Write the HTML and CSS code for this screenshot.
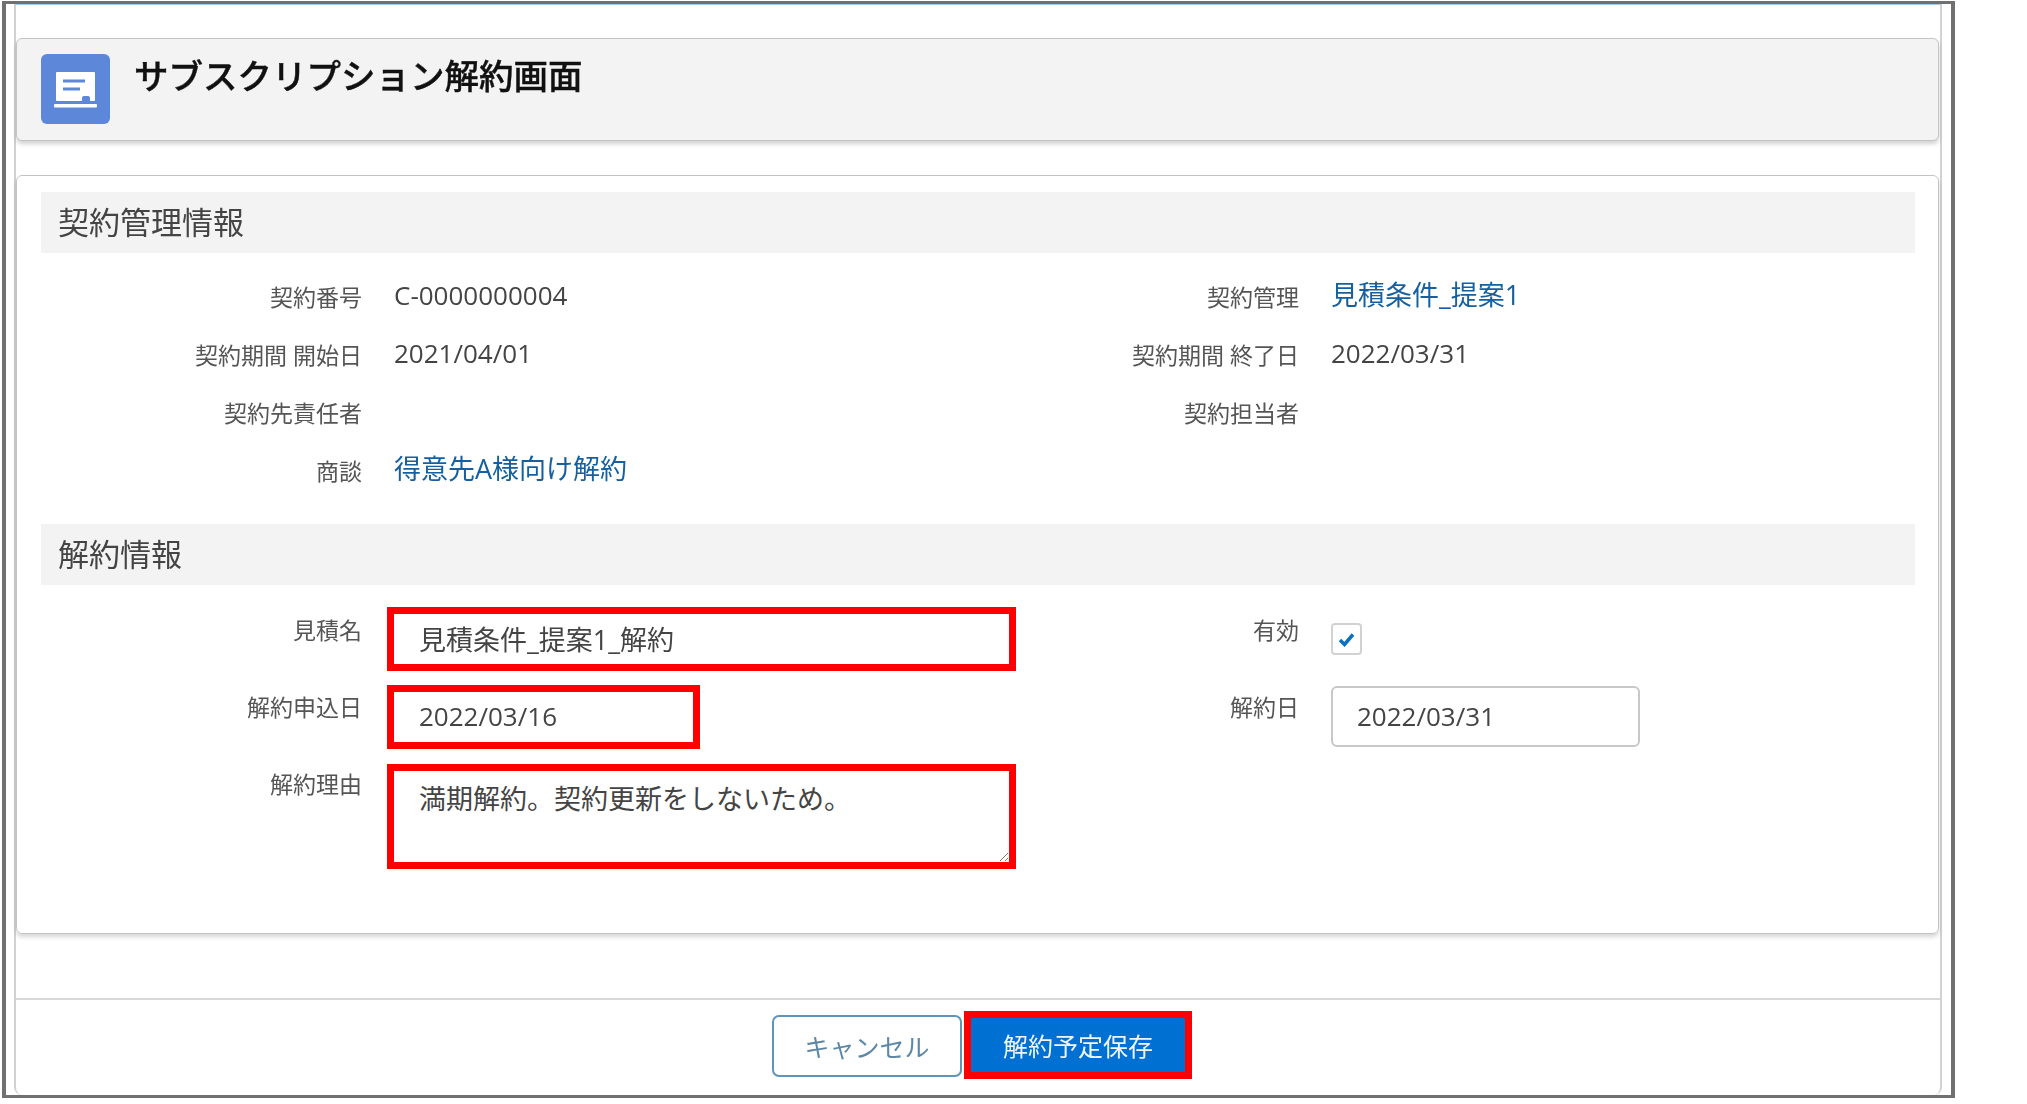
FILE: index.html
```html
<!DOCTYPE html>
<html lang="ja">
<head>
<meta charset="utf-8">
<title>サブスクリプション解約画面</title>
<link rel="stylesheet" href="styles.css">
</head>
<body>
<div class="frame">
  <div class="modal">
    <header class="page-header">
      <span class="page-icon">
        <svg width="69" height="70" viewBox="0 0 69 70">
          <rect x="15" y="18" width="39" height="29" rx="1" fill="#fff"/>
          <rect x="13" y="50" width="43" height="3.5" rx="1" fill="#fff"/>
          <path d="M22 27h22M22 35h17" stroke="#5d87d8" stroke-width="3" fill="none"/>
          <path d="M41 47v-3a2 2 0 0 1 2-2h4a2 2 0 0 1 2 2v3z" fill="#5d87d8"/>
        </svg>
      </span>
      <h1 class="page-title">サブスクリプション解約画面</h1>
    </header>

    <section class="card">
      <h2 class="section-title">契約管理情報</h2>
      <div class="info-grid">
        <div class="field"><span class="label">契約番号</span><span class="value">C-0000000004</span></div>
        <div class="field"><span class="label">契約管理</span><a class="value link">見積条件_提案1</a></div>
        <div class="field"><span class="label">契約期間 開始日</span><span class="value">2021/04/01</span></div>
        <div class="field"><span class="label">契約期間 終了日</span><span class="value">2022/03/31</span></div>
        <div class="field"><span class="label">契約先責任者</span><span class="value"></span></div>
        <div class="field"><span class="label">契約担当者</span><span class="value"></span></div>
        <div class="field"><span class="label">商談</span><a class="value link">得意先A様向け解約</a></div>
        <div class="field"></div>
      </div>

      <h2 class="section-title section-title-second">解約情報</h2>
      <div class="edit-grid">
        <div class="field edit-field">
          <span class="label edit-label">見積名</span>
          <div class="control marked wide text-ja">見積条件_提案1_解約</div>
        </div>
        <div class="field edit-field">
          <span class="label edit-label">有効</span>
          <span class="checkbox">
            <svg width="17" height="15" viewBox="0 0 17 15"><path d="M2 8l4.500 4.500L15 2.500" stroke="#0b6fc2" stroke-width="3.500" fill="none"/></svg>
          </span>
        </div>
        <div class="field edit-field">
          <span class="label edit-label-mid">解約申込日</span>
          <div class="control marked narrow">2022/03/16</div>
        </div>
        <div class="field edit-field">
          <span class="label edit-label-mid">解約日</span>
          <div class="control plain">2022/03/31</div>
        </div>
        <div class="field edit-field tall">
          <span class="label edit-label-tall">解約理由</span>
          <div class="control marked wide textarea text-ja">満期解約。契約更新をしないため。
            <svg class="resize-grip" width="8" height="8" viewBox="0 0 8 8"><path d="M0 8L8 0M5 8l3-3" stroke="#777" stroke-width="1"/></svg>
          </div>
        </div>
      </div>
    </section>

    <footer class="footer">
      <button class="btn btn-cancel" type="button">キャンセル</button>
      <button class="btn btn-save" type="button">解約予定保存</button>
    </footer>
  </div>
</div>
</body>
</html>
```

FILE: styles.css
```css
* { box-sizing: border-box; }

html, body {
  margin: 0;
  padding: 0;
  background: #fff;
}

body {
  width: 2027px;
  height: 1104px;
  overflow: hidden;
  padding: 1px 0 0 2px;
  font-family: "Open Sans", "Noto Sans CJK JP", sans-serif;
  color: #3e3e3c;
}

.frame {
  width: 1953px;
  height: 1097px;
  border: solid #707070;
  border-width: 3px 4px;
  padding: 0 9px 0 8px;
  display: flex;
  flex-direction: column;
  filter: blur(.6px);
}

.modal {
  flex: 1;
  display: flex;
  flex-direction: column;
  border: 2px solid #d2d2d2;
  border-top: 1px solid #a9cde8;
  border-bottom: 0;
  border-radius: 0 0 8px 8px;
}

.page-header {
  display: flex;
  align-items: flex-start;
  gap: 24px;
  height: 103px;
  margin: 33px 1px 0 0;
  padding: 15px 24px;
  background: #f3f3f3;
  border: 1px solid #c4c4c4;
  border-radius: 6px;
  box-shadow: 0 3px 4px rgba(0, 0, 0, .18);
}

.page-icon {
  display: block;
  width: 69px;
  height: 70px;
  background: #5d87d8;
  border-radius: 6px;
}

.page-title {
  margin: 2px 0 0;
  font-size: 34.5px;
  line-height: 40px;
  font-weight: 500;
  color: #111;
  -webkit-text-stroke: .4px #111;
}

.card {
  margin: 34px 1px 0 0;
  padding: 16px 23px 63px 24px;
  height: 759px;
  border: 1px solid #c4c4c4;
  border-radius: 6px;
  box-shadow: 0 3px 4px rgba(0, 0, 0, .16);
}

.section-title {
  display: flex;
  align-items: center;
  height: 61px;
  margin: 0;
  padding: 0 0 5px 17px;
  background: #f3f3f3;
  font-size: 31px;
  font-weight: 400;
  color: #444;
}

.section-title-second { margin-top: 24px; }

.info-grid {
  display: grid;
  grid-template-columns: 1fr 1fr;
  grid-auto-rows: 58px;
  margin-top: 15px;
}

.edit-grid {
  display: grid;
  grid-template-columns: minmax(0, 1fr) minmax(0, 1fr);
  row-gap: 14px;
  margin-top: 22px;
}

.field {
  display: grid;
  grid-template-columns: 321px minmax(0, 1fr);
  column-gap: 32px;
  align-items: center;
}

.edit-field { align-items: start; }
.tall { margin-top: 1px; }

.label {
  text-align: right;
  font-size: 23px;
  line-height: 30px;
  color: #555;
}

.edit-label { padding-top: 8px; }
.edit-label-mid { padding-top: 7px; }
.edit-label-tall { padding-top: 5px; }

.value {
  font-size: 26px;
  line-height: 36px;
  color: #444;
  position: relative;
  top: -2px;
}

.link {
  font-size: 27px;
  color: #17609f;
}

.control {
  font-size: 26px;
  color: #444;
  padding-left: 26px;
  display: flex;
  align-items: center;
  background: #fff;
}

.text-ja { font-size: 27px; }

.marked {
  border: 7px solid #f00;
  height: 64px;
  margin-left: -7px;
  padding: 0 0 2px 25px;
}

.wide { width: 629px; }
.narrow { width: 313px; }

.textarea {
  position: relative;
  height: 105px;
  align-items: flex-start;
  padding-top: 10px;
  line-height: 36px;
}

.resize-grip {
  position: absolute;
  right: 1px;
  bottom: 1px;
}

.plain {
  width: 309px;
  height: 61px;
  margin-top: 1px;
  border: 2px solid #c8c8c8;
  border-radius: 6px;
  padding: 0 0 2px 24px;
}

.checkbox {
  display: flex;
  align-items: center;
  justify-content: center;
  width: 31px;
  height: 32px;
  margin-top: 16px;
  border: 2px solid #d2d2d2;
  border-radius: 4px;
  background: #fff;
}

.footer {
  margin-top: auto;
  height: 97px;
  border-top: 2px solid #d8d8d8;
  padding: 0 0 5px 8px;
  display: flex;
  align-items: center;
  justify-content: center;
  gap: 2px;
}

.btn {
  font-family: inherit;
  font-size: 25px;
  padding: 0;
  cursor: pointer;
}

.btn-cancel {
  width: 190px;
  height: 62px;
  margin-top: 2px;
  background: #fff;
  border: 2px solid #5f94bb;
  border-radius: 7px;
  color: #5c87a6;
}

.btn-save {
  width: 228px;
  height: 68px;
  background: #0070d2;
  border: 7px solid #f00;
  color: #eef6fc;
}
```
